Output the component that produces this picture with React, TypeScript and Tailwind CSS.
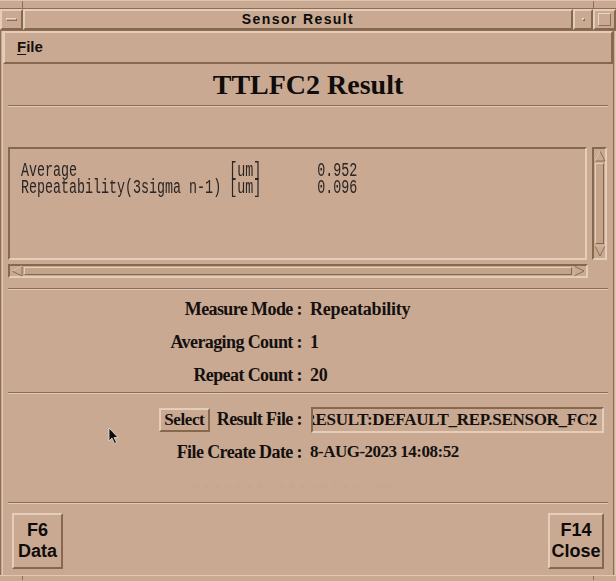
import React from "react";

const raised =
  "border-2 border-t-[#e4cdb9] border-l-[#e4cdb9] border-b-[#86684f] border-r-[#86684f]";
const sunken =
  "border-2 border-t-[#86684f] border-l-[#86684f] border-b-[#e4cdb9] border-r-[#e4cdb9]";

const serif = "font-['Liberation_Serif',serif]";
const sans = "font-['Liberation_Sans',Arial,sans-serif]";
const label = `${serif} text-[18px] font-bold tracking-[-0.6px] text-[#141010]`;

function Etched() {
  return <div className="mx-[5px] h-[2px] border-t border-t-[#8c6e58] border-b border-b-[#e2cab6]" />;
}

function Arrow({ dir }: { dir: "up" | "down" | "left" | "right" }) {
  const pts = {
    up: "6,1 11,11 1,11",
    down: "1,1 11,1 6,11",
    left: "1,6 11,1 11,11",
    right: "1,1 11,6 1,11",
  }[dir];
  return (
    <svg width="12" height="12" viewBox="0 0 12 12" className="shrink-0">
      <polygon points={pts} fill="#c9a991" stroke="#8a6c57" strokeWidth="1" />
      <polyline
        points={dir === "up" ? "1,11 6,1" : dir === "left" ? "1,6 11,1" : dir === "down" ? "1,1 11,1" : "1,11 1,1"}
        fill="none"
        stroke="#ead6c4"
        strokeWidth="1"
      />
    </svg>
  );
}

function FormRow({ name, value }: { name: string; value: string }) {
  return (
    <div className="grid h-[33px] grid-cols-[299px_1fr] items-center">
      <div className={`${label} text-right`}>{name} :</div>
      <div className={`${serif} pl-[8px] text-[18px] font-bold tracking-[-0.2px] text-[#141010]`}>{value}</div>
    </div>
  );
}

function FKey({ fn, name, width }: { fn: string; name: string; width: string }) {
  return (
    <div
      className={`${raised} ${sans} ${width} flex h-[56px] flex-col items-center justify-center text-[18px] font-bold leading-[21px] text-[#0d0b0b]`}
    >
      <span>{fn}</span>
      <span>{name}</span>
    </div>
  );
}

export default function App() {
  return (
    <div className="relative h-[581px] w-[616px] overflow-hidden bg-[#c9a991] text-black">
      {/* resize frame, top edge */}
      <div className="flex h-[9px] border-b border-b-[#8c6e58] border-t border-t-[#ddc4b0]">
        <div className="w-[23px] border-r border-r-[#8c6e58]" />
        <div className="flex-1 border-r border-r-[#8c6e58]" />
        <div className="w-[22px]" />
      </div>

      {/* title bar */}
      <div className="flex h-[22px] border-b border-b-[#8c6e58]">
        <div className={`${raised} flex w-[23px] items-center justify-center border`}>
          <div className="h-[3px] w-[11px] border border-t-[#ead6c4] border-l-[#ead6c4] border-b-[#8a6c57] border-r-[#8a6c57]" />
        </div>
        <div
          className={`${raised} ${sans} flex flex-1 items-center justify-center border text-[14px] font-bold tracking-[1.4px] text-[#0c0a0a]`}
        >
          Sensor Result
        </div>
        <div className={`${raised} flex w-[20px] items-center justify-center border`}>
          <div className="h-[3px] w-[3px] border border-t-[#ead6c4] border-l-[#ead6c4] border-b-[#8a6c57] border-r-[#8a6c57]" />
        </div>
        <div className={`${raised} flex w-[23px] items-center justify-center border`}>
          <div className="h-[13px] w-[13px] border border-t-[#ead6c4] border-l-[#ead6c4] border-b-[#8a6c57] border-r-[#8a6c57]" />
        </div>
      </div>

      <div className="flex h-[544px]">
        <div className="w-[3px] border-r border-r-[#e0c8b4] border-l border-l-[#8c6e58]" />
        <div className="flex flex-1 flex-col">
          {/* menu bar */}
          <div className={`${raised} flex h-[33px] items-center px-[12px]`}>
            <span className={`${sans} text-[15px] font-bold text-[#141010]`}>
              <span className="underline underline-offset-2">F</span>ile
            </span>
          </div>

          {/* heading */}
          <div className={`${serif} flex h-[41px] items-center justify-center text-[28px] font-bold text-[#0f0c0c]`}>
            TTLFC2 Result
          </div>
          <Etched />

          {/* result text area with scrollbars */}
          <div className="mt-[40px] flex gap-[5px] pl-[5px] pr-[6px]">
            <div className={`${sunken} h-[113px] flex-1 overflow-hidden px-[11px] pt-[13px]`}>
              <pre className="origin-top-left scale-x-[0.667] font-['Liberation_Mono',monospace] text-[20px] leading-[17px] text-[#2a2424]">
                {"Average                   [um]       0.952\nRepeatability(3sigma n-1) [um]       0.096"}
              </pre>
            </div>
            <div className={`${sunken} flex h-[113px] w-[15px] flex-col items-center justify-between py-[1px]`}>
              <Arrow dir="up" />
              <div className="my-[1px] w-[9px] flex-1 border border-t-[#e4cdb9] border-l-[#e4cdb9] border-b-[#86684f] border-r-[#86684f] bg-[#c4a38b]" />
              <Arrow dir="down" />
            </div>
          </div>
          <div className="mt-[4px] flex pl-[5px] pr-[25px]">
            <div className={`${sunken} flex h-[14px] flex-1 items-center justify-between px-[1px]`}>
              <Arrow dir="left" />
              <div className="mx-[1px] h-[8px] flex-1 border border-t-[#e4cdb9] border-l-[#e4cdb9] border-b-[#86684f] border-r-[#86684f] bg-[#c4a38b]" />
              <Arrow dir="right" />
            </div>
          </div>

          <div className="mt-[10px]">
            <Etched />
          </div>

          <div className="pt-[3px]">
            <FormRow name="Measure Mode" value="Repeatability" />
            <FormRow name="Averaging Count" value="1" />
            <FormRow name="Repeat Count" value="20" />
          </div>

          <Etched />

          {/* result file */}
          <div className="mt-[12px] grid h-[26px] grid-cols-[299px_1fr] items-center">
            <div className="flex items-center justify-end gap-[7px]">
              <div
                className={`${raised} ${serif} flex h-[24px] w-[51px] items-center justify-center text-[17px] font-bold tracking-[-0.4px] text-[#141010]`}
              >
                Select
              </div>
              <span className={label}>Result File :</span>
            </div>
            <div className="pl-[9px]">
              <div className={`${sunken} flex h-[26px] w-[293px] items-center justify-end overflow-hidden pr-[5px]`}>
                <span className={`${serif} whitespace-nowrap text-[17px] font-bold tracking-[-0.3px] text-[#141010]`}>
                  RESULT:DEFAULT_REP.SENSOR_FC2
                </span>
              </div>
            </div>
          </div>
          <div className="grid h-[40px] grid-cols-[299px_1fr] items-center">
            <div className={`${label} text-right`}>File Create Date :</div>
            <div className={`${serif} pl-[8px] text-[17px] font-bold tracking-[-0.5px] text-[#141010]`}>
              8-AUG-2023 14:08:52
            </div>
          </div>
          <div className="flex h-[30px] items-center justify-center pr-[30px]">
            <span className={`${serif} text-[15px] tracking-[1px] text-[#c0a089] blur-[1px]`}>
              · · · · · · · · · · · · · · · · · · ·
            </span>
          </div>

          <Etched />

          {/* function keys */}
          <div className="flex flex-1 items-start justify-between pl-[9px] pr-[9px] pt-[9px]">
            <FKey fn="F6" name="Data" width="w-[51px]" />
            <FKey fn="F14" name="Close" width="w-[56px]" />
          </div>
        </div>
        <div className="w-[3px] border-l border-l-[#8c6e58] border-r border-r-[#e0c8b4]" />
      </div>

      {/* resize frame, bottom edge */}
      <div className="flex h-[5px] border-t border-t-[#e0c8b4]">
        <div className="w-[23px] border-r border-r-[#8c6e58]" />
        <div className="flex-1 border-r border-r-[#8c6e58]" />
        <div className="w-[22px]" />
      </div>

      {/* mouse pointer */}
      <svg className="absolute left-[108px] top-[427px]" width="12" height="18" viewBox="0 0 12 18">
        <path d="M1 1 L1 14 L4 11 L6.5 16.5 L8.5 15.5 L6 10.5 L10 10.5 Z" fill="#0a0a0a" stroke="#e8e0d8" strokeWidth="0.8" />
      </svg>
    </div>
  );
}
